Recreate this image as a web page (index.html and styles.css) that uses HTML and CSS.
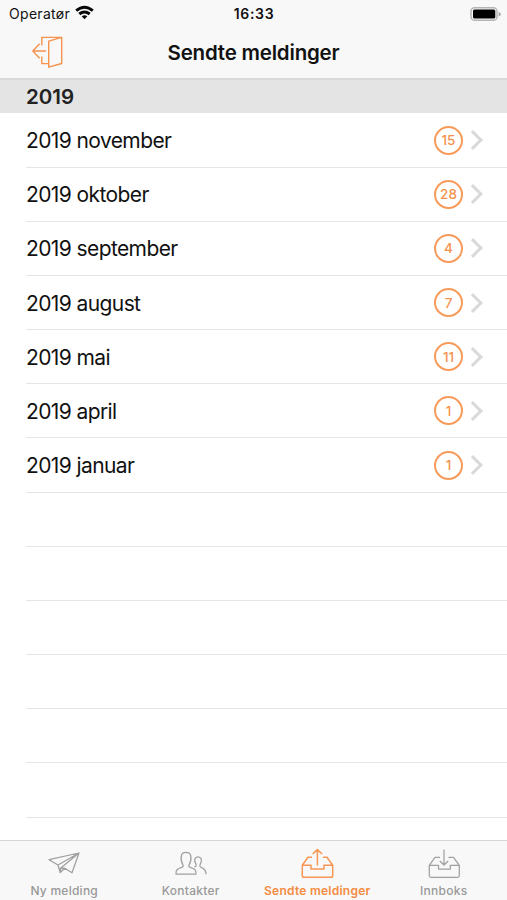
FILE: index.html
```html
<!DOCTYPE html>
<html lang="nb">
<head>
<meta charset="utf-8">
<title>Sendte meldinger</title>
<link rel="stylesheet" href="styles.css">
</head>
<body>
<div class="app">
  <header class="top">
    <div class="status">
      <div class="carrier"><span>Operatør</span>
        <svg class="wifi" viewBox="76 5 19 15" width="19" height="15"><g fill="none" stroke="#080808" stroke-width="2.9"><path d="M77.2 10.7Q85.5 3.8 93.8 10.7"/><path d="M80.3 14Q85.5 9.8 90.7 14"/></g><path d="M82.7 16.3Q85.5 14.2 88.3 16.3L85.5 19.2Z" fill="#080808"/></svg>
      </div>
      <time class="clock">16:33</time>
      <svg class="battery" viewBox="470 5 32 16" width="32" height="16"><rect x="471" y="6.7" width="26" height="12.6" rx="3.6" fill="#f8f8f8" stroke="#b4b4b4" stroke-width="1.5"/><rect x="473" y="8.6" width="22.3" height="9" rx="1.5"/><path d="M498.6 10.8Q501 12 501 13.2T498.6 15.6Z" fill="#a8a8a8"/></svg>
    </div>
    <div class="nav">
      <svg class="exit" viewBox="30 34 34 36" width="34" height="36"><path d="M48.7 41.2L61.7 37.4V63.5L48.7 67.2Z"/><path d="M61.7 37.4H41.8V45.5M41.8 56.5V63.6H48.7"/><path d="M46 51H32.8M39.6 43.8L32.8 51L39.6 58.2"/></svg>
      <h1>Sendte meldinger</h1>
    </div>
  </header>
  <h2 class="section">2019</h2>
  <ul class="list">
    <li><span class="name">2019 november</span><b>15</b><i></i></li>
    <li><span class="name">2019 oktober</span><b>28</b><i></i></li>
    <li><span class="name">2019 september</span><b>4</b><i></i></li>
    <li><span class="name">2019 august</span><b>7</b><i></i></li>
    <li><span class="name">2019 mai</span><b>11</b><i></i></li>
    <li><span class="name">2019 april</span><b>1</b><i></i></li>
    <li><span class="name">2019 januar</span><b>1</b><i></i></li>
    <li></li><li></li><li></li><li></li><li></li><li></li>
  </ul>
  <nav class="tabs">
    <a><svg viewBox="46 846 36 34" width="36" height="34"><path d="M49 859.7L79 853L72 872.8L64.8 868.2L60.2 872.5L58 865ZM79 853L58 865M79 853L60.5 868.3V872.5M60.5 868.3L64.8 868.2"/></svg><span>Ny melding</span></a>
    <a><svg viewBox="173 846 36 34" width="36" height="34"><path d="M176 874.1C175.5 869.5 178 868.7 182 867.3Q183.8 866.6 182.8 864.6Q180.6 861 181.3 856Q182 852.3 186 852.3T190.8 856Q191.5 861 189.2 864.6Q188.2 866.6 190 867.3C194 868.7 196.5 869.5 196 874.1Z"/><path d="M194.3 866.8Q196.8 866 196 864.3Q194.3 861.5 194.8 859Q195.5 856.9 198 856.9T201.3 859Q201.8 862 200.1 864.7Q199.2 866.5 201.2 867.3C204.5 868.5 206 870 206 874.2"/></svg><span>Kontakter</span></a>
    <a class="active"><svg viewBox="299 846 36 34" width="36" height="34"><path d="M312 857.3H308L302.3 865.3V875.5Q302.3 877.3 304 877.3H331Q332.7 877.3 332.7 875.5V865.3L327 857.3H323M302.3 865.3H311V869.1H324V865.3H332.7M317.4 865.5V850M312.7 854L317.4 849.6L322.1 854"/></svg><span>Sendte meldinger</span></a>
    <a><svg viewBox="426 846 36 34" width="36" height="34"><path d="M440 857.3H435L429.3 865.3V875.5Q429.3 877.3 431 877.3H457.6Q459.3 877.3 459.3 875.5V865.3L453.5 857.3H448.5M429.3 865.3H438.5V869.1H450.3V865.3H459.3M444 849.5V864.5M439.8 861L444 865L448.2 861"/></svg><span>Innboks</span></a>
  </nav>
</div>
</body>
</html>
```
FILE: styles.css
```css
* { box-sizing: border-box; }
body { margin: 0; background: #fff; color: #111; font-family: Inter, "Liberation Sans", sans-serif; }
svg { display: block; }
.app { height: 900px; display: flex; flex-direction: column; overflow: hidden; }
.top { height: 80px; background: #f8f8f8; border-bottom: 2px solid #d9d9d9; flex: none; }
.status { height: 26px; display: grid; grid-template-columns: 1fr auto 1fr; padding: 0 5px 0 9px; align-items: center; line-height: 28px; }
.carrier { display: flex; gap: 6px; font-size: 14px; height: 28px; align-items: center; letter-spacing: 0.3px; }
.wifi { margin: -3px 0 0 -1px; }
.clock { font-size: 14px; font-weight: 600; letter-spacing: 0.7px; margin-left: -3px; }
.battery { justify-self: end; }
.nav { height: 53px; display: grid; grid-template-columns: 1fr auto 1fr; align-items: center; padding: 0 30px; }
.exit { margin-top: -1px; }
.exit path { fill: none; stroke: #f5924d; stroke-width: 1.4; stroke-linejoin: round; }
h1 { margin: 0; font-size: 20.5px; font-weight: 600; letter-spacing: -0.2px; line-height: 53px; }
.section { margin: 0; height: 33px; flex: none; background: #e4e4e4; padding-left: 26px; font-size: 20.5px; line-height: 34px; font-weight: 600; color: #222; }
.list { list-style: none; margin: 0; padding: 0.5px 0 0 26px; flex: 1; min-height: 0; overflow: hidden; }
.list li { height: 54.17px; display: flex; align-items: center; border-bottom: 1px solid #e5e5e5; }
.name { flex: 1; font-size: 21px; line-height: 54px; letter-spacing: -0.6px; padding-top: 2px; }
b { width: 29px; height: 29px; border: 2px solid #f79a5a; border-radius: 50%; color: #f5924d; font-size: 13.5px; font-weight: 500; display: flex; align-items: center; justify-content: center; }
i { width: 14px; height: 14px; margin: 0 27px 0 3px; border: solid #d9d9d9; border-width: 3px 3px 0 0; transform: rotate(45deg); }
.tabs { height: 60px; flex: none; background: #f8f8f8; border-top: 1px solid #d6d6d6; display: grid; grid-template-columns: repeat(4, 1fr); color: #999; padding-left: 1px; }
.tabs a { display: flex; flex-direction: column; align-items: center; padding-top: 5px; font-size: 12px; font-weight: 500; line-height: 22px; letter-spacing: 0.25px; white-space: nowrap; }
.tabs path { fill: none; stroke: #a0a0a0; stroke-width: 1.25; stroke-linejoin: round; }
.tabs .active { color: #f58b42; font-weight: 600; }
.tabs .active path { stroke: #f79655; stroke-width: 1.5; }
```
